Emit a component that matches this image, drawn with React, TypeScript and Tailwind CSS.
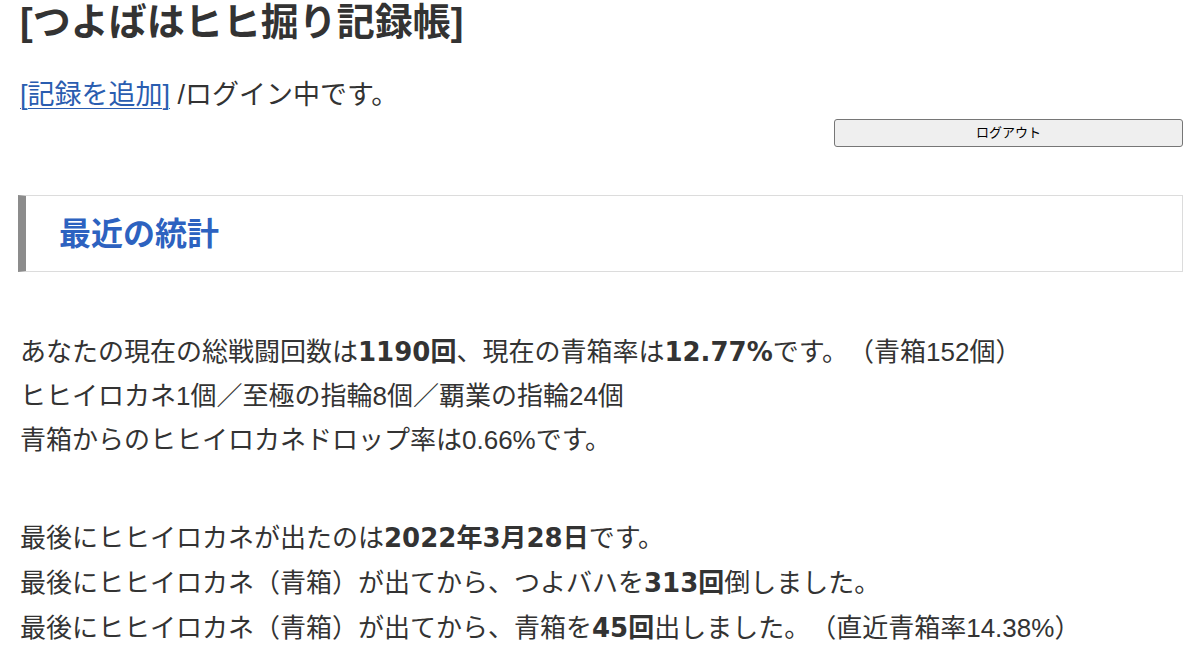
const font = {
  fontFamily: '"Liberation Sans", "Noto Sans CJK JP", sans-serif',
}

// bold figures sit in a wider face than the body text
function Stat({ children }: { children: React.ReactNode }) {
  return (
    <b className="font-bold [font-family:'DejaVu_Sans','Noto_Sans_CJK_JP',sans-serif]">
      {children}
    </b>
  )
}

export default function App() {
  return (
    <div
      style={font}
      className="min-h-[672px] bg-white pl-5 pr-[17px] text-[#333] [text-spacing-trim:space-all]"
    >
      <h1 className="text-[38px] leading-[44px] font-bold text-[#333]">
        [つよばはヒヒ掘り記録帳]
      </h1>

      <p className="mt-[29px] text-[27px] leading-[44px]">
        <a href="#" className="text-[#2a5db0] underline decoration-1 underline-offset-4">
          [記録を追加]
        </a>{" "}
        /ログイン中です。
      </p>

      <div className="flex justify-end">
        <button className="mt-[2px] h-[28px] w-[349px] rounded-[3px] border border-[#767676] bg-[#efefef] text-[13px] text-black">
          ログアウト
        </button>
      </div>

      <div className="mt-[48px] -ml-[2px] flex h-[77px] items-center border border-l-[8px] border-[#dcdcdc] border-l-[#8c8c8c] pl-[33px]">
        <h2 className="text-[32px] font-bold text-[#2d62c0]">最近の統計</h2>
      </div>

      <div className="mt-[58px] text-[26px] leading-[44px]">
        <p>
          あなたの現在の総戦闘回数は<Stat>1190回</Stat>、現在の青箱率は<Stat>12.77%</Stat>です。（青箱152個）
        </p>
        <p>ヒヒイロカネ1個／至極の指輪8個／覇業の指輪24個</p>
        <p>青箱からのヒヒイロカネドロップ率は0.66%です。</p>
      </div>

      <div className="mt-[54px] text-[26px] leading-[45px]">
        <p>
          最後にヒヒイロカネが出たのは<Stat>2022年3月28日</Stat>です。
        </p>
        <p>
          最後にヒヒイロカネ（青箱）が出てから、つよバハを<Stat>313回</Stat>倒しました。
        </p>
        <p>
          最後にヒヒイロカネ（青箱）が出てから、青箱を<Stat>45回</Stat>出しました。（直近青箱率14.38%）
        </p>
      </div>
    </div>
  )
}
